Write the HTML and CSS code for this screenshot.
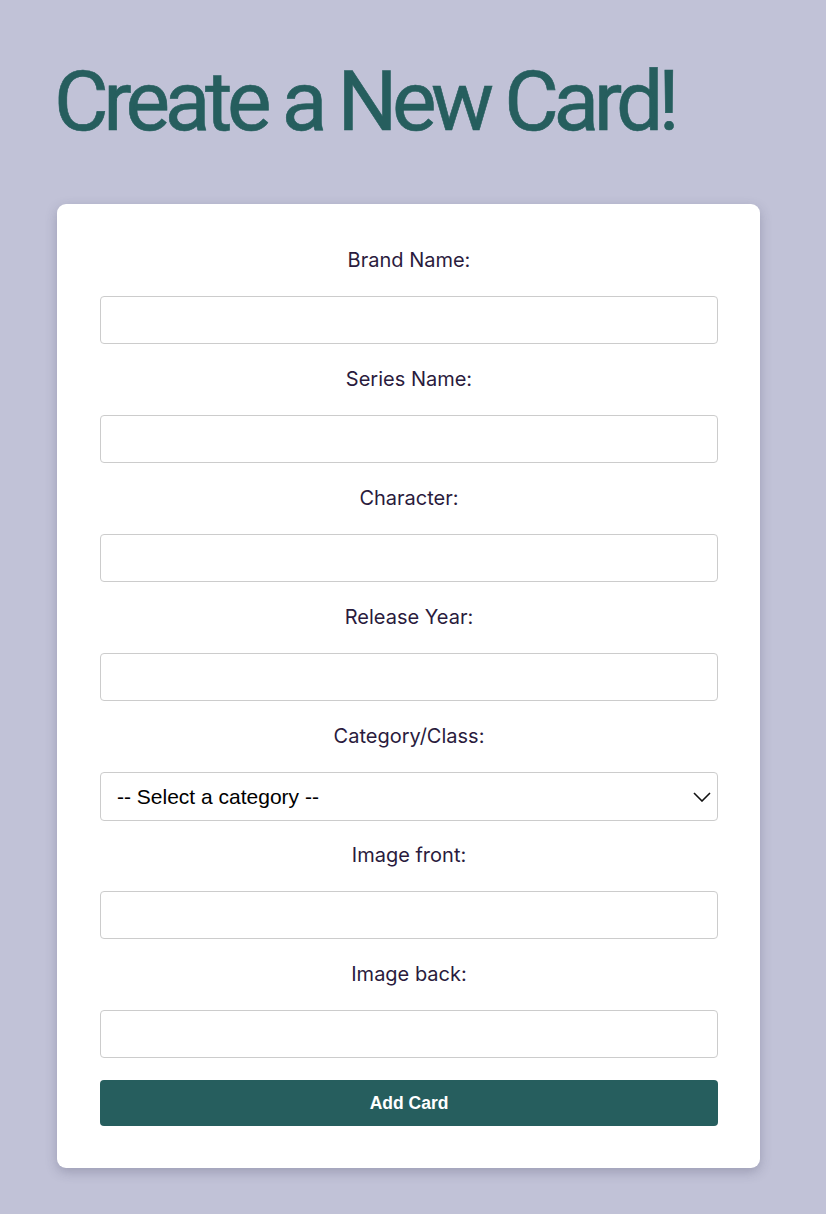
FILE: index.html
```html
<!DOCTYPE html>
<html lang="en">
<head>
<meta charset="utf-8">
<title>Create a New Card!</title>
<link rel="stylesheet" href="styles.css">
</head>
<body>
<main class="page">
  <h1 class="title">Create a New Card!</h1>
  <form class="card">
    <label class="field-label" for="brand">Brand Name:</label>
    <input class="field-input" id="brand" type="text">
    <label class="field-label" for="series">Series Name:</label>
    <input class="field-input" id="series" type="text">
    <label class="field-label" for="character">Character:</label>
    <input class="field-input" id="character" type="text">
    <label class="field-label" for="year">Release Year:</label>
    <input class="field-input" id="year" type="text">
    <label class="field-label" for="category">Category/Class:</label>
    <select class="field-input field-select" id="category">
      <option>-- Select a category --</option>
    </select>
    <label class="field-label" for="front">Image front:</label>
    <input class="field-input" id="front" type="text">
    <label class="field-label" for="back">Image back:</label>
    <input class="field-input" id="back" type="text">
    <button class="submit" type="button">Add Card</button>
  </form>
</main>
</body>
</html>
```
FILE: styles.css
```css
html, body {
  margin: 0;
  padding: 0;
}
body {
  background: #c1c2d7;
  font-family: Inter, "Noto Sans", sans-serif;
  min-height: 1214px;
}
.page {
  padding: 60px 0 40px 57px;
}
.title {
  margin: 0 0 60px -3px;
  font-family: Roboto, Inter, sans-serif;
  font-weight: 400;
  font-size: 84px;
  line-height: 84px;
  height: 84px;
  letter-spacing: -5.4px;
  color: #265e5e;
  -webkit-text-stroke: 0.6px #265e5e;
  white-space: nowrap;
}
.card {
  width: 703px;
  box-sizing: border-box;
  background: #fff;
  border-radius: 9px;
  box-shadow: 0 4px 12px rgba(60, 60, 90, 0.28);
  padding: 44px 42px 42px 43px;
  display: flex;
  flex-direction: column;
}
.field-label {
  display: block;
  text-align: center;
  font-size: 20px;
  line-height: 24px;
  color: #2a1b3d;
  margin-bottom: 24px;
}
.field-input {
  display: block;
  box-sizing: border-box;
  width: 100%;
  height: 48px;
  border: 1px solid #cccccc;
  border-radius: 4px;
  background: #fff;
  margin: 0 0 23px;
  padding: 0 16px;
  font-size: 16px;
}
.field-input:last-of-type {
  margin-bottom: 22px;
}
.field-select {
  height: 49px;
  appearance: none;
  -webkit-appearance: none;
  font-family: "Liberation Sans", Arial, sans-serif;
  font-size: 21px;
  color: #000;
  background-image: url("data:image/svg+xml,%3Csvg xmlns='http://www.w3.org/2000/svg' width='18' height='10' viewBox='0 0 18 10'%3E%3Cpath d='M1 1l8 8 8-8' fill='none' stroke='%23111' stroke-width='1.6'/%3E%3C/svg%3E");
  background-repeat: no-repeat;
  background-position: right 6px center;
}
.submit {
  display: block;
  width: 100%;
  height: 46px;
  border: none;
  border-radius: 4px;
  background: #265e5e;
  color: #fff;
  font-family: "Liberation Sans", Arial, sans-serif;
  font-weight: bold;
  font-size: 17.5px;
  cursor: pointer;
}
```
